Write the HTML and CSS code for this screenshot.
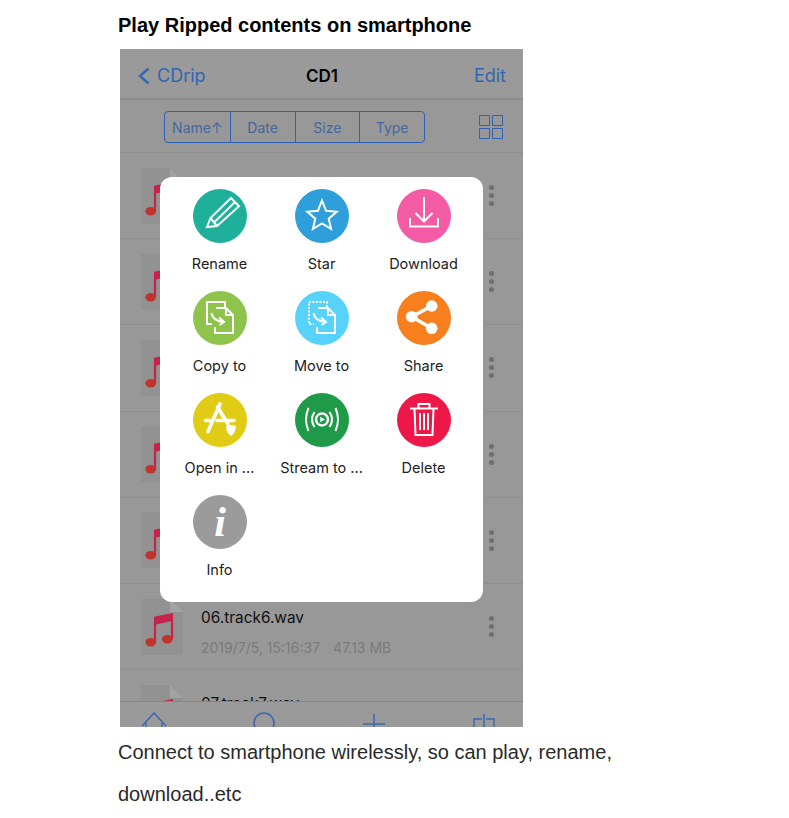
FILE: index.html
```html
<!DOCTYPE html>
<html lang="en">
<head>
  <meta charset="UTF-8" />
  <meta name="viewport" content="width=device-width, initial-scale=1.0" />
  <title>Play Ripped contents on smartphone</title>
  <link rel="stylesheet" href="styles.css">
</head>
<body>
  <svg class="defs" width="0" height="0">
    <symbol id="file" viewBox="0 0 42 56">
      <path class="paper" d="M0 0H29L42 13V56H0Z"/>
      <path class="fold" d="M29 0L42 13H29Z"/>
      <path class="note-beam" d="M13 17.7L32 14V21.7L13 26Z"/>
      <path class="note-stem" d="M14 20V43M31 15V40"/>
      <ellipse class="note-head" cx="9.7" cy="43.3" rx="5.3" ry="4.2"/>
      <ellipse class="note-head" cx="26.3" cy="40.3" rx="5.3" ry="4.2"/>
    </symbol>
  </svg>

  <div class="container">
    <h1>Play Ripped contents on smartphone</h1>

    <div class="phone">
      <div class="nav">
        <div class="nav-back">
          <svg class="chevron" viewBox="0 0 12 18"><path d="M10.5 1.5L2 9L10.5 16.5"/></svg>
          CDrip
        </div>
        <div class="nav-title">CD1</div>
        <div class="nav-edit">Edit</div>
      </div>

      <div class="sortbar">
        <div class="sort">
          <div class="sort-item">Name↑</div>
          <div class="sort-item">Date</div>
          <div class="sort-item">Size</div>
          <div class="sort-item">Type</div>
        </div>
        <svg class="grid-icon" viewBox="0 0 24 24">
          <path d="M.5 .5H10.5V10.5H.5ZM13.5 .5H23.5V10.5H13.5ZM.5 13.5H10.5V23.5H.5ZM13.5 13.5H23.5V23.5H13.5Z"/>
        </svg>
      </div>

      <div class="list">
        <div class="row"><svg class="file"><use href="#file"/></svg><div class="row-text"></div><div class="dots"><i></i><i></i><i></i></div></div>
        <div class="row"><svg class="file"><use href="#file"/></svg><div class="row-text"></div><div class="dots"><i></i><i></i><i></i></div></div>
        <div class="row"><svg class="file"><use href="#file"/></svg><div class="row-text"></div><div class="dots"><i></i><i></i><i></i></div></div>
        <div class="row"><svg class="file"><use href="#file"/></svg><div class="row-text"></div><div class="dots"><i></i><i></i><i></i></div></div>
        <div class="row"><svg class="file"><use href="#file"/></svg><div class="row-text"></div><div class="dots"><i></i><i></i><i></i></div></div>
        <div class="row">
          <svg class="file"><use href="#file"/></svg>
          <div class="row-text">
            <div class="row-name">06.track6.wav</div>
            <div class="row-meta"><span>2019/7/5, 15:16:37</span><span>47.13 MB</span></div>
          </div>
          <div class="dots"><i></i><i></i><i></i></div>
        </div>
        <div class="row">
          <svg class="file"><use href="#file"/></svg>
          <div class="row-text">
            <div class="row-name">07.track7.wav</div>
          </div>
        </div>
      </div>

      <div class="tabbar">
        <svg class="tab" viewBox="0 0 26 26"><path d="M1 14L13 1L25 14M5 11V26M21 11V26"/></svg>
        <svg class="tab" viewBox="0 0 26 26"><circle cx="13" cy="11" r="10"/></svg>
        <svg class="tab" viewBox="0 0 26 26"><path d="M13 2V26M2 12H24"/></svg>
        <svg class="tab" viewBox="0 0 26 26"><path d="M3 26V7H11M23 26V7H15M13 2V26M8 26V23M18 26V23"/></svg>
      </div>

      <div class="sheet">
        <div class="action">
          <svg class="badge teal" viewBox="0 0 54 54">
            <path d="M14 38L17.5 29L38 9L46 17.3L24 37ZM17.5 29L24 37M22 32.5L41.5 13.5"/>
          </svg>
          <div class="action-label">Rename</div>
        </div>
        <div class="action">
          <svg class="badge blue" viewBox="0 0 54 54">
            <path d="M27 11.5L31.1 21.8L41.7 22.7L33.7 29.7L36.1 40L27 34.5L17.9 40L20.3 29.7L12.3 22.7L22.9 21.8Z"/>
          </svg>
          <div class="action-label">Star</div>
        </div>
        <div class="action">
          <svg class="badge pink" viewBox="0 0 54 54">
            <path d="M27 8V32M18.5 24L27 32.5L35.5 24M13 29V37.5H41V29"/>
          </svg>
          <div class="action-label">Download</div>
        </div>

        <div class="action">
          <svg class="badge lime" viewBox="0 0 54 54">
            <path d="M32 16V11H14V33H19M23 17H33L40 24V42H22V36M33 17V24H40M18.5 22Q20 30 30 31M26 26.5L31 31L26.5 34"/>
          </svg>
          <div class="action-label">Copy to</div>
        </div>
        <div class="action">
          <svg class="badge cyan" viewBox="0 0 54 54">
            <path class="dashed" d="M32 16V11H14V33H19"/>
            <path d="M23 17H33L40 24V42H22V36M33 17V24H40M18.5 22Q20 30 30 31M26 26.5L31 31L26.5 34"/>
          </svg>
          <div class="action-label">Move to</div>
        </div>
        <div class="action">
          <svg class="badge orange" viewBox="0 0 54 54">
            <path class="thick" d="M34.7 15L14.7 25.7L34.7 37.3"/>
            <circle class="solid" cx="34.7" cy="15" r="5.8"/>
            <circle class="solid" cx="14.7" cy="25.7" r="5.8"/>
            <circle class="solid" cx="34.7" cy="37.3" r="5.8"/>
          </svg>
          <div class="action-label">Share</div>
        </div>

        <div class="action">
          <svg class="badge yellow" viewBox="0 0 54 54">
            <path class="thick" d="M27 11L15 38.5M24.5 14L35 31M12.5 27.5H20M24 27.5H30M34 27.5H41"/>
            <path class="solid" d="M33 33Q39 31 43 33Q42 41 38 43Q33 40 33 33Z"/>
          </svg>
          <div class="action-label">Open in ...</div>
        </div>
        <div class="action">
          <svg class="badge green" viewBox="0 0 54 54">
            <circle class="play-ring" cx="27" cy="26.5" r="6"/>
            <path class="solid" d="M25.2 23.8L30 26.5L25.2 29.2Z"/>
            <path d="M19.5 19Q14.5 26.5 19.5 34M34.5 19Q39.5 26.5 34.5 34M13.5 15Q8.5 26.5 13.5 38M40.5 15Q45.5 26.5 40.5 38"/>
          </svg>
          <div class="action-label">Stream to ...</div>
        </div>
        <div class="action">
          <svg class="badge red" viewBox="0 0 54 54">
            <path d="M13 15.5H41M21.5 15V11H32.5V15M17.5 15.5L18.5 42H35.5L36.5 15.5M23 20V37M27 20V37M31 20V37"/>
          </svg>
          <div class="action-label">Delete</div>
        </div>

        <div class="action">
          <svg class="badge grey" viewBox="0 0 54 54">
            <text class="info-glyph" x="27" y="41" text-anchor="middle">i</text>
          </svg>
          <div class="action-label">Info</div>
        </div>
      </div>
    </div>

    <p class="caption">Connect to smartphone wirelessly, so can play, rename, download..etc</p>
  </div>
</body>
</html>
```

FILE: styles.css
```css
body {
  font-family: "Liberation Sans", Arial, sans-serif;
  background: #fff;
  color: #1a1a1a;
  margin: 0;
}
.defs {
  position: absolute;
}
.container {
  width: 505px;
  margin-left: 118px;
  padding-top: 14px;
}
h1 {
  margin: 0 0 12px 0;
  font-size: 20px;
  line-height: 23px;
  font-weight: bold;
  color: #000;
}
.caption {
  margin: 4px 0 0 0;
  font-size: 20px;
  line-height: 42px;
  color: #2a2a2a;
}

/* Phone, already dimmed behind the action sheet */
.phone {
  position: relative;
  width: 403px;
  height: 678px;
  margin-left: 2px;
  overflow: hidden;
  display: flex;
  flex-direction: column;
  background: #989898;
  font-family: Inter, "Liberation Sans", sans-serif;
}
.nav {
  flex: none;
  height: 51px;
  box-sizing: border-box;
  padding: 4px 17px 0 18px;
  display: grid;
  grid-template-columns: 1fr auto 1fr;
  align-items: center;
  border-bottom: 2px solid #8b8b8b;
  font-size: 18px;
  color: #3266b2;
  background: #9a9a9a;
}
.nav-back {
  display: flex;
  align-items: center;
  gap: 7px;
}
.chevron {
  width: 12px;
  height: 18px;
  fill: none;
  stroke: #3266b2;
  stroke-width: 2.4;
}
.nav-title {
  font-weight: 600;
  font-size: 17px;
  color: #000;
}
.nav-edit {
  text-align: right;
}
.sortbar {
  flex: none;
  height: 53px;
  box-sizing: border-box;
  padding: 2px 20px 0 44px;
  display: flex;
  align-items: center;
  justify-content: space-between;
  border-bottom: 1px solid #8f8f8f;
}
.sort {
  width: 261px;
  height: 32px;
  box-sizing: border-box;
  display: grid;
  grid-template-columns: repeat(4, 1fr);
  border: 1px solid #2f62b8;
  border-radius: 4px;
}
.sort-item {
  display: flex;
  align-items: center;
  justify-content: center;
  font-size: 14px;
  color: #44689e;
  border-left: 1px solid #2f62b8;
}
.sort-item:first-child {
  border-left: none;
}
.grid-icon {
  width: 24px;
  height: 24px;
  fill: none;
  stroke: #2f62b8;
}

/* File list */
.list {
  flex: 1;
  min-height: 0;
  overflow: hidden;
}
.row {
  height: 86.2px;
  box-sizing: border-box;
  padding: 0 29px 0 21px;
  display: flex;
  align-items: center;
  border-bottom: 1px solid #8f8f8f;
}
.file {
  flex: none;
  width: 42px;
  height: 56px;
}
.paper {
  fill: #929292;
}
.fold {
  fill: #a2a2a2;
}
.note-beam {
  fill: #c4234a;
}
.note-stem {
  fill: none;
  stroke: #c4234a;
  stroke-width: 2.2;
}
.note-head {
  fill: #c2332e;
}
.row-text {
  flex: 1;
  align-self: flex-start;
  padding: 24px 0 0 18px;
}
.row-name {
  font-size: 15.4px;
  line-height: 20px;
  color: #111;
}
.row-meta {
  margin-top: 11px;
  display: flex;
  gap: 13px;
  font-size: 14px;
  line-height: 18px;
  color: #7b7b7b;
}
.dots {
  display: flex;
  flex-direction: column;
  gap: 3px;
}
.dots i {
  width: 5px;
  height: 5px;
  border-radius: 50%;
  background: #6f6f6f;
}

/* Bottom tab bar */
.tabbar {
  flex: none;
  height: 26px;
  box-sizing: border-box;
  padding: 10px 26px 0 21px;
  display: flex;
  justify-content: space-between;
  align-items: flex-start;
  overflow: hidden;
  background: #9a9a9a;
  border-top: 1px solid #858585;
}
.tab {
  flex: none;
  width: 26px;
  height: 26px;
  fill: none;
  stroke: #3a68b0;
  stroke-width: 1.5;
}

/* Action sheet */
.sheet {
  position: absolute;
  left: 40px;
  top: 128px;
  width: 323px;
  height: 425px;
  box-sizing: border-box;
  padding: 12px 8.5px 0 8.5px;
  display: grid;
  grid-template-columns: repeat(3, 1fr);
  grid-auto-rows: 102px;
  background: #fff;
  border-radius: 12px;
}
.action {
  display: flex;
  flex-direction: column;
  align-items: center;
}
.badge {
  width: 54px;
  height: 54px;
  border-radius: 50%;
  fill: none;
  stroke: #fff;
  stroke-width: 2;
}
.teal { background: #1fb09b; }
.blue { background: #2f9fdc; }
.pink { background: #f45ba5; }
.lime { background: #8ec44c; }
.cyan { background: #57d2fb; }
.orange { background: #f77f1e; }
.yellow { background: #e0cc14; }
.green { background: #1f9a48; }
.red { background: #ee1848; }
.grey { background: #9b9b9b; }
.badge .solid {
  fill: #fff;
  stroke: none;
}
.badge .thick {
  stroke-width: 3.6;
  stroke-linecap: round;
}
.badge .dashed {
  stroke-dasharray: 2 1.5;
}
.badge .play-ring {
  stroke-width: 2.4;
}
.info-glyph {
  font-family: "Liberation Serif", serif;
  font-style: italic;
  font-weight: bold;
  font-size: 42px;
  fill: #fff;
  stroke: none;
}
.action-label {
  margin-top: 12px;
  font-size: 14.5px;
  line-height: 18px;
  color: #222;
}
```
